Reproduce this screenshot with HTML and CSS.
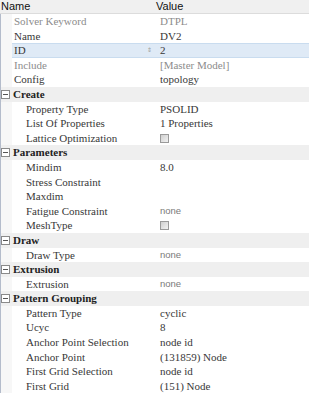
FILE: index.html
```html
<!DOCTYPE html>
<html lang="en">
<head>
    <meta charset="UTF-8">
    <title>Property Grid</title>
    <link rel="stylesheet" href="styles.css">
</head>
<body>
    <div class="grid">
        <div class="grid-header">
            <div class="hcell hname">Name</div>
            <div class="hcell">Value</div>
        </div>

        <div class="row"><div class="gutter"></div><div class="name dim">Solver Keyword</div><div class="value dim">DTPL</div></div>
        <div class="row"><div class="gutter"></div><div class="name">Name</div><div class="value">DV2</div></div>
        <div class="row selected"><div class="gutter"></div><div class="name">ID<span class="spin">&#8661;</span></div><div class="value">2</div></div>
        <div class="row"><div class="gutter"></div><div class="name dim">Include</div><div class="value dim">[Master Model]</div></div>
        <div class="row"><div class="gutter"></div><div class="name">Config</div><div class="value">topology</div></div>

        <div class="row group"><div class="gutter"><span class="minus"></span></div><div class="name">Create</div></div>
        <div class="row"><div class="gutter"></div><div class="name sub">Property Type</div><div class="value">PSOLID</div></div>
        <div class="row"><div class="gutter"></div><div class="name sub">List Of Properties</div><div class="value">1 Properties</div></div>
        <div class="row"><div class="gutter"></div><div class="name sub">Lattice Optimization</div><div class="value"><span class="check"></span></div></div>

        <div class="row group"><div class="gutter"><span class="minus"></span></div><div class="name">Parameters</div></div>
        <div class="row"><div class="gutter"></div><div class="name sub">Mindim</div><div class="value">8.0</div></div>
        <div class="row"><div class="gutter"></div><div class="name sub">Stress Constraint</div><div class="value"></div></div>
        <div class="row"><div class="gutter"></div><div class="name sub">Maxdim</div><div class="value"></div></div>
        <div class="row"><div class="gutter"></div><div class="name sub">Fatigue Constraint</div><div class="value combo">none</div></div>
        <div class="row"><div class="gutter"></div><div class="name sub">MeshType</div><div class="value"><span class="check"></span></div></div>

        <div class="row group"><div class="gutter"><span class="minus"></span></div><div class="name">Draw</div></div>
        <div class="row"><div class="gutter"></div><div class="name sub">Draw Type</div><div class="value combo">none</div></div>

        <div class="row group"><div class="gutter"><span class="minus"></span></div><div class="name">Extrusion</div></div>
        <div class="row"><div class="gutter"></div><div class="name sub">Extrusion</div><div class="value combo">none</div></div>

        <div class="row group"><div class="gutter"><span class="minus"></span></div><div class="name">Pattern Grouping</div></div>
        <div class="row"><div class="gutter"></div><div class="name sub">Pattern Type</div><div class="value">cyclic</div></div>
        <div class="row"><div class="gutter"></div><div class="name sub">Ucyc</div><div class="value">8</div></div>
        <div class="row"><div class="gutter"></div><div class="name sub">Anchor Point Selection</div><div class="value">node id</div></div>
        <div class="row"><div class="gutter"></div><div class="name sub">Anchor Point</div><div class="value">(131859) Node</div></div>
        <div class="row"><div class="gutter"></div><div class="name sub">First Grid Selection</div><div class="value">node id</div></div>
        <div class="row"><div class="gutter"></div><div class="name sub">First Grid</div><div class="value">(151) Node</div></div>
    </div>
</body>
</html>
```

FILE: styles.css
```css
body {
    margin: 0;
    padding: 0;
    background-color: white;
    overflow: hidden;
}

.grid {
    width: 309px;
    font-family: 'Liberation Serif', serif;
    font-size: 11px;
    color: #383838;
}

.grid-header {
    display: flex;
    height: 13px;
    background-color: #f0f0f0;
    border-bottom: 1px solid #dcdcdc;
    font-family: 'Liberation Sans', sans-serif;
    font-size: 11px;
    line-height: 13px;
    color: #111;
}

.hcell {
    padding-left: 1px;
}

.hname {
    width: 154px;
}

.row {
    display: flex;
    height: 14.6px;
    line-height: 14.6px;
    box-sizing: border-box;
}

.gutter {
    width: 12px;
    flex: none;
    background-color: #f7f7f7;
    border-left: 1px solid #b4bccb;
    box-sizing: border-box;
    display: flex;
    align-items: center;
}

.name {
    width: 142px;
    flex: none;
    padding-left: 2px;
    box-sizing: border-box;
    white-space: nowrap;
    position: relative;
}

.name.sub {
    padding-left: 14px;
}

.value {
    flex: 1;
    padding-left: 6px;
    white-space: nowrap;
}

.dim {
    color: #8c8c8c;
}

.combo {
    font-family: 'Liberation Sans', sans-serif;
    font-size: 9.5px;
    color: #7a7a7a;
}

.group {
    background-color: #efefef;
}

.group .gutter {
    background-color: #efefef;
}

.group .name {
    font-weight: bold;
    color: #222;
    padding-left: 1px;
    width: auto;
}

.minus {
    width: 7px;
    height: 7px;
    border: 1px solid #8a8a8a;
    background-color: white;
    position: relative;
}

.minus::after {
    content: '';
    position: absolute;
    left: 1px;
    right: 1px;
    top: 3px;
    height: 1px;
    background-color: #555;
}

.selected .name,
.selected .value {
    background-color: #dfeaf6;
    border-top: 1px solid #c9dcef;
    border-bottom: 1px solid #c9dcef;
    line-height: 12.6px;
}

.spin {
    position: absolute;
    right: 2px;
    top: 0;
    font-size: 6px;
    color: #999;
}

.check {
    display: inline-block;
    width: 7px;
    height: 7px;
    border: 1px solid #9a9a9a;
    background: linear-gradient(135deg, #cfcfcf, #f2f2f2);
    vertical-align: middle;
    margin-top: -2px;
}
```
